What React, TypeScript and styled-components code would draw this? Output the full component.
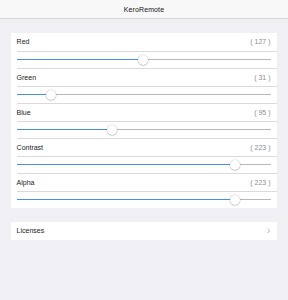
import React from "react";
import styled, { createGlobalStyle } from "styled-components";

const Global = createGlobalStyle`
  html, body { margin: 0; padding: 0; background: #efeff4; }
  body { font-family: "Liberation Sans", Arial, sans-serif; -webkit-font-smoothing: antialiased; }
`;

const Page = styled.div`
  width: 288px;
  min-height: 300px;
  background: #efeff4;
`;

const NavBar = styled.div`
  height: 18px;
  background: #f8f8f8;
  border-bottom: 1px solid #d6d6d9;
  display: flex;
  align-items: center;
  justify-content: center;
  font-size: 7px;
  font-weight: 400;
  color: #111;
  letter-spacing: 0.1px;
`;

const Content = styled.div`
  padding: 14px 11px;
  display: flex;
  flex-direction: column;
  gap: 14px;
`;

const Card = styled.div`
  background: #fff;
  padding-left: 5.6px;
  display: flex;
  flex-direction: column;
`;

const Row = styled.div<{ $first?: boolean }>`
  height: 17.5px;
  box-sizing: border-box;
  border-top: ${(p) => (p.$first ? "none" : "0.5px solid #d9d9de")};
  padding-right: 6.5px;
  display: flex;
  align-items: center;
  justify-content: space-between;
  font-size: 7px;
  color: #222;
`;

const Value = styled.span`
  color: #8e8e93;
  font-size: 7px;
`;

const Chevron = styled.span`
  color: #b8b8be;
  font-size: 11px;
  line-height: 1;
  margin-top: -1px;
`;

const Track = styled.div`
  position: relative;
  flex: 1;
  height: 1px;
  background: #b8b8bc;
`;

const Fill = styled.div`
  height: 100%;
  background: #4a8fe2;
`;

const Thumb = styled.div`
  position: absolute;
  top: 50%;
  width: 10px;
  height: 10px;
  margin-left: -5px;
  margin-top: -5px;
  border-radius: 50%;
  background: #fff;
  box-shadow: 0 0.5px 1.5px rgba(0, 0, 0, 0.3), 0 0 0 0.4px rgba(0, 0, 0, 0.12);
`;

const Slider = ({ value }: { value: number }) => {
  const frac = value / 255;
  const center = `calc(5px + (100% - 10px) * ${frac})`;
  return (
    <Track>
      <Fill style={{ width: center }} />
      <Thumb style={{ left: center }} />
    </Track>
  );
};

const items = [
  { name: "Red", value: 127 },
  { name: "Green", value: 31 },
  { name: "Blue", value: 95 },
  { name: "Contrast", value: 223 },
  { name: "Alpha", value: 223 },
];

export default function App() {
  return (
    <Page>
      <Global />
      <NavBar>KeroRemote</NavBar>
      <Content>
        <Card>
          {items.map((it, i) => (
            <React.Fragment key={it.name}>
              <Row $first={i === 0}>
                <span>{it.name}</span>
                <Value>( {it.value} )</Value>
              </Row>
              <Row>
                <Slider value={it.value} />
              </Row>
            </React.Fragment>
          ))}
        </Card>
        <Card>
          <Row $first>
            <span>Licenses</span>
            <Chevron>›</Chevron>
          </Row>
        </Card>
      </Content>
    </Page>
  );
}
